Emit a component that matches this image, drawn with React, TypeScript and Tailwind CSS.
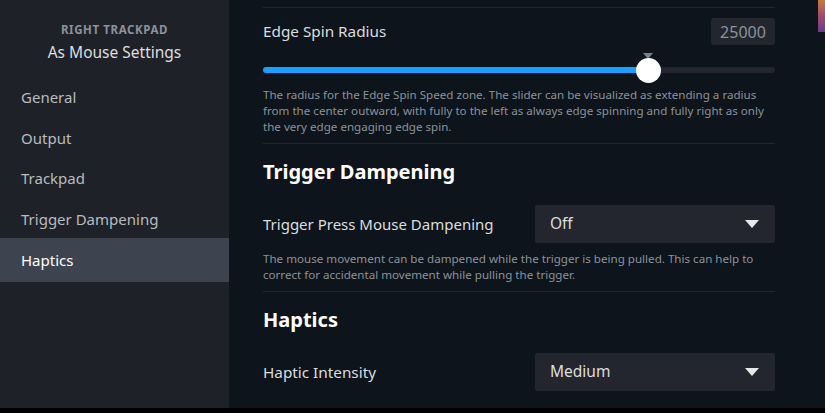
import React from "react";

const font = { fontFamily: '"Noto Sans", "Open Sans", sans-serif' };

function Caret() {
  return (
    <svg width="14" height="8" viewBox="0 0 14 8" className="shrink-0">
      <path d="M0 0 L14 0 L7 8 Z" fill="#e6e8ea" />
    </svg>
  );
}

function Dropdown({ value }: { value: string }) {
  return (
    <div className="w-[240px] h-[38px] bg-[#23262e] rounded-[2px] flex items-center justify-between pl-[15px] pr-[16px]">
      <span className="text-[15.5px] text-[#dcdedf]">{value}</span>
      <Caret />
    </div>
  );
}

export default function App() {
  const nav = ["General", "Output", "Trackpad", "Trigger Dampening", "Haptics"];
  return (
    <div className="w-[825px] h-[413px] overflow-hidden bg-black flex flex-col" style={font}>
      <div className="flex h-[408px]">
        <aside className="w-[229px] shrink-0 bg-[#1f2128] flex flex-col">
          <div className="pt-[22px] flex flex-col items-center">
            <div className="text-[11.5px] font-bold tracking-[0.6px] text-[#8b929a] leading-[16px]">RIGHT TRACKPAD</div>
            <div className="text-[15.5px] text-[#dcdedf] leading-[22px] mt-[3px]">As Mouse Settings</div>
          </div>
          <nav className="mt-[14px] flex flex-col">
            {nav.map((n) => (
              <div
                key={n}
                className={
                  "flex items-center pl-[21px] text-[15px] " +
                  (n === "Haptics" ? "bg-[#3d4450] text-white h-[44px] -mt-[1px]" : "h-[40.5px] text-[#b8bcbf]")
                }
              >
                {n}
              </div>
            ))}
          </nav>
        </aside>
        <main className="flex-1 bg-[#0e141b] relative">
          <div className="w-[512px] ml-[34px] flex flex-col">
            <div className="h-[8px] border-b border-[#23262e]" />
            <div className="flex items-center justify-between mt-[10px] h-[27px]">
              <span className="text-[15.3px] text-[#dcdedf]">Edge Spin Radius</span>
              <div className="w-[64px] h-[27px] bg-[#23262e] rounded-[3px] flex items-center justify-center text-[16px] text-[#8b929a]">25000</div>
            </div>
            <div className="relative h-[34px] mt-[7px]">
              <div className="absolute left-0 right-0 top-[15px] h-[6px] rounded-full bg-[#23262e]" />
              <div className="absolute left-0 top-[15px] h-[6px] w-[385px] rounded-full bg-[#1a9fff]" />
              <svg className="absolute left-[380px] top-[1px]" width="10" height="6" viewBox="0 0 10 6">
                <path d="M0 0 L10 0 L5 6 Z" fill="#7a808a" />
              </svg>
              <div className="absolute left-[373px] top-[6px] w-[25px] h-[25px] rounded-full bg-white" />
            </div>
            <p className="mt-[1px] text-[11.6px] leading-[16px] text-[#8b929a]">
              The radius for the Edge Spin Speed zone. The slider can be visualized as extending a radius from the center outward, with fully to the left as always edge spinning and fully right as only the very edge engaging edge spin.
            </p>
            <div className="mt-[8px] border-b border-[#23262e]" />
            <h2 className="mt-[14px] text-[20px] font-bold text-white leading-[28px]">Trigger Dampening</h2>
            <div className="flex items-center justify-between mt-[19px]">
              <span className="text-[15px] text-[#dcdedf]">Trigger Press Mouse Dampening</span>
              <Dropdown value="Off" />
            </div>
            <p className="mt-[8px] text-[11.6px] leading-[16px] text-[#8b929a]">
              The mouse movement can be dampened while the trigger is being pulled. This can help to correct for accidental movement while pulling the trigger.
            </p>
            <div className="mt-[8px] border-b border-[#23262e]" />
            <h2 className="mt-[14px] text-[20px] font-bold text-white leading-[28px]">Haptics</h2>
            <div className="flex items-center justify-between mt-[19px]">
              <span className="text-[15.3px] text-[#dcdedf]">Haptic Intensity</span>
              <Dropdown value="Medium" />
            </div>
          </div>
          <div className="absolute right-0 top-0 w-[7px] h-[32px] bg-gradient-to-b from-[#c87a3a] via-[#a04a6a] to-[#6a3a8a]" />
        </main>
      </div>
    </div>
  );
}
